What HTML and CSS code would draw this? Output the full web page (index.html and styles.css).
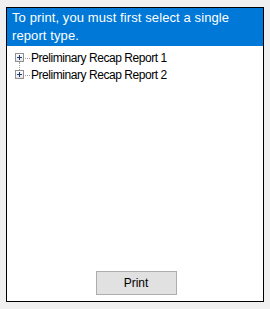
FILE: index.html
```html
<!DOCTYPE html>
<html lang="en">
<head>
    <meta charset="UTF-8">
    <title>Print Report</title>
    <link rel="stylesheet" href="styles.css">
</head>
<body>
    <div class="panel">
        <div class="notice">To print, you must first select a single report type.</div>

        <ul class="tree">
            <li class="tree-item first">
                <span class="expander"></span>
                <span class="label">Preliminary Recap Report 1</span>
            </li>
            <li class="tree-item last">
                <span class="expander"></span>
                <span class="label">Preliminary Recap Report 2</span>
            </li>
        </ul>

        <div class="footer">
            <button class="print-button">Print</button>
        </div>
    </div>
</body>
</html>
```

FILE: styles.css
```css
body {
    margin: 0;
    padding: 7px 6px;
    background-color: #f0f0f0;
    font-family: "Liberation Sans", Arial, sans-serif;
    font-size: 12px;
}

.panel {
    width: 256px;
    height: 293px;
    border: 1px solid #000;
    background: white;
    display: flex;
    flex-direction: column;
}

.notice {
    background: #0078d7;
    color: white;
    font-size: 13px;
    line-height: 18px;
    letter-spacing: 0.1px;
    padding: 1px 4px 1px 5px;
}

.tree {
    list-style: none;
    margin: 0;
    padding: 3px 0 0 8px;
    flex: 1;
}

.tree-item {
    position: relative;
    display: flex;
    align-items: center;
    height: 17px;
    color: #000;
    font-size: 12px;
    letter-spacing: -0.45px;
}

/* dotted connector between nodes */
.tree-item.first::after {
    content: "";
    position: absolute;
    left: 4px;
    top: 13px;
    height: 8px;
    border-left: 1px dotted #a0a0a0;
}

.expander {
    position: relative;
    width: 7px;
    height: 7px;
    border: 1px solid #919191;
    background: linear-gradient(#fff, #e6e6e6);
    flex: 0 0 auto;
}

.expander::before {
    content: "";
    position: absolute;
    left: 1px;
    top: 3px;
    width: 5px;
    height: 1px;
    background: #1e3a6e;
}

.expander::after {
    content: "";
    position: absolute;
    left: 3px;
    top: 1px;
    width: 1px;
    height: 5px;
    background: #1e3a6e;
}

.label {
    margin-left: 7px;
    position: relative;
}

.label::before {
    content: "";
    position: absolute;
    left: -6px;
    top: 50%;
    width: 5px;
    border-top: 1px dotted #a0a0a0;
}

.footer {
    display: flex;
    justify-content: center;
    padding: 0 0 6px 2px;
}

.print-button {
    width: 81px;
    height: 24px;
    border: 1px solid #adadad;
    background: #e1e1e1;
    font-family: inherit;
    font-size: 12px;
    color: #000;
    padding: 0;
}
```
